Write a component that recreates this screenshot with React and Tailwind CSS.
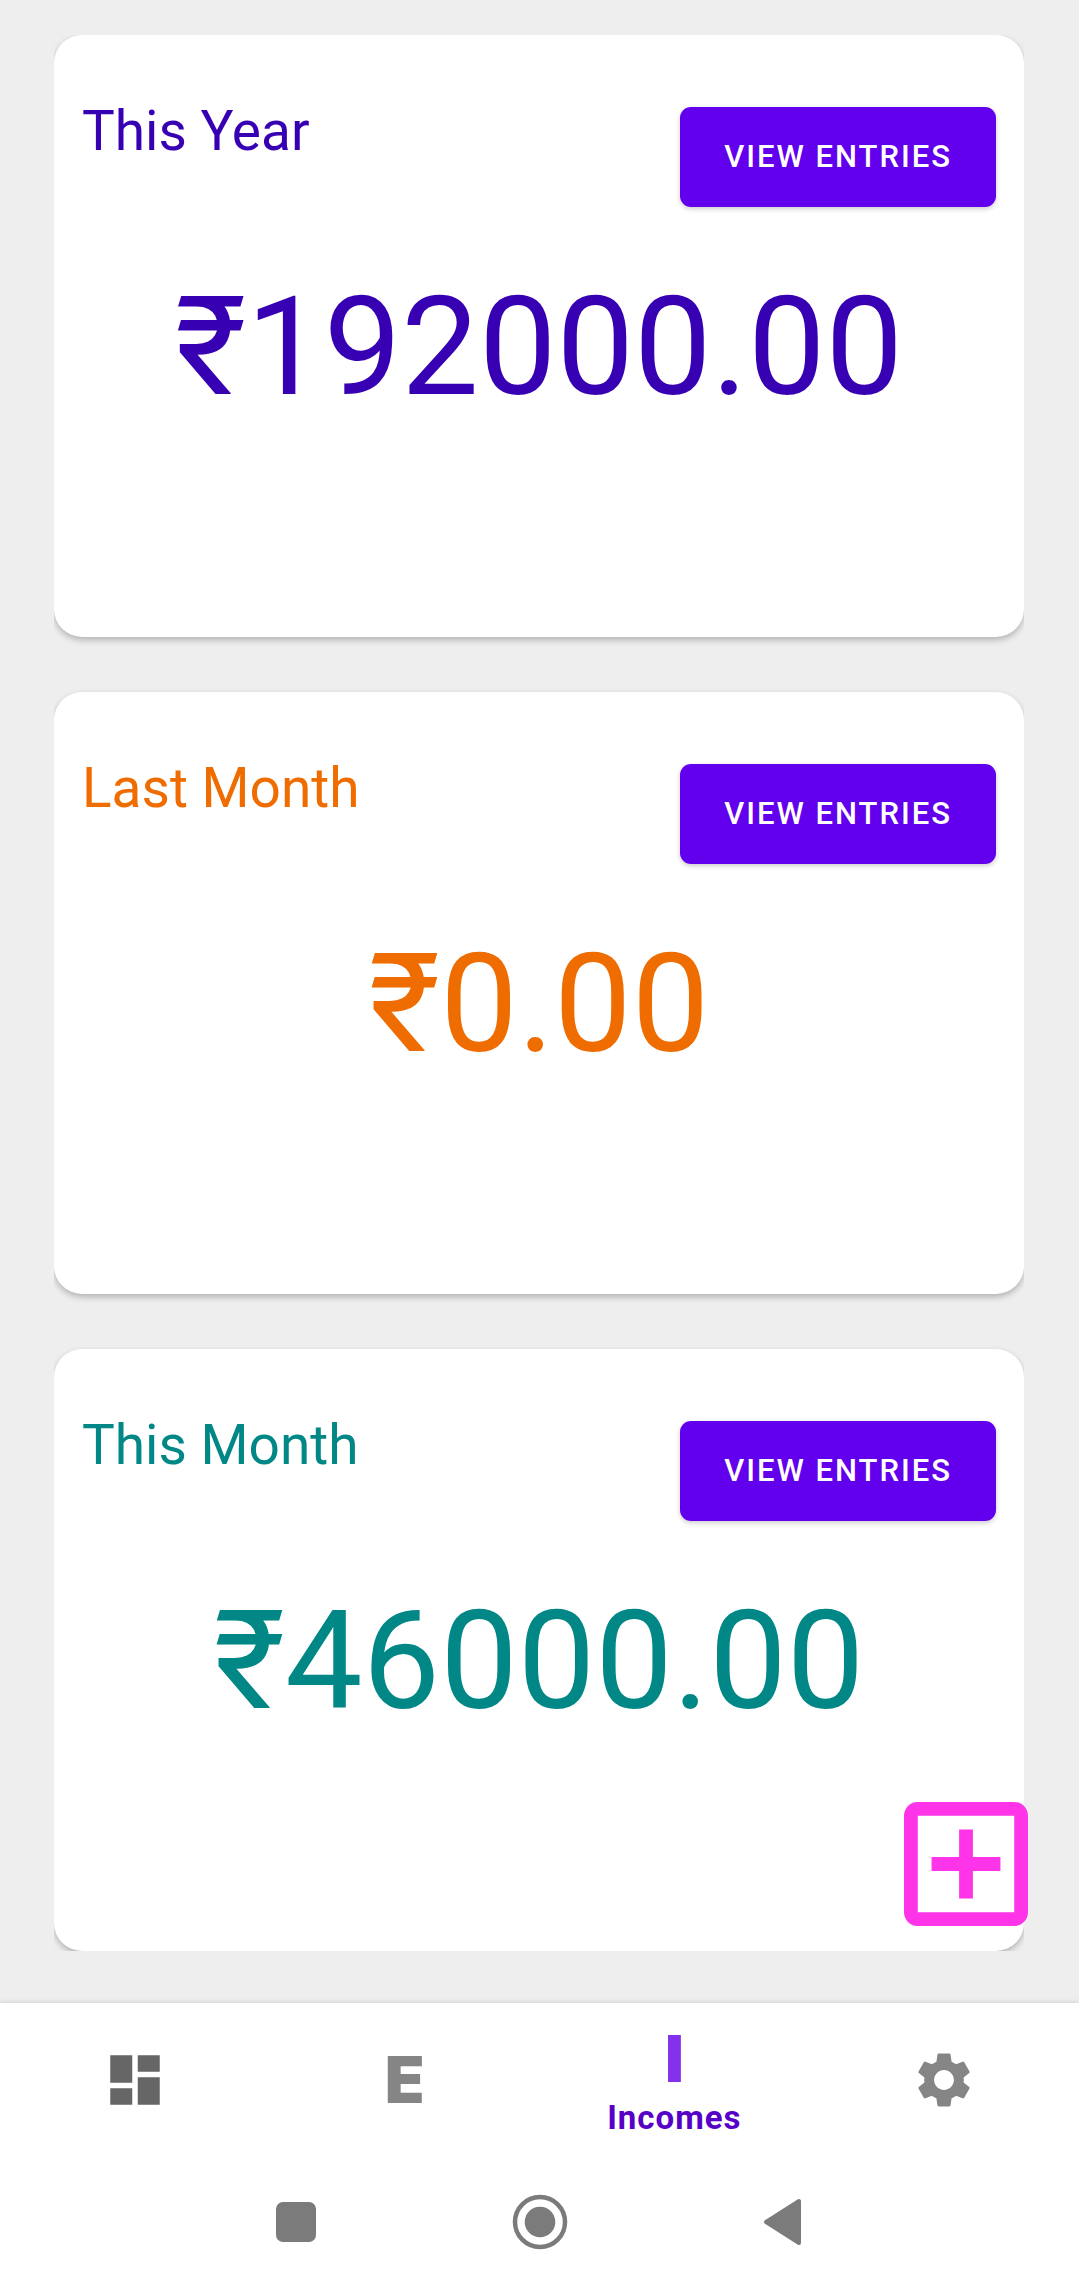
import React, { useState } from "react";
import { MdDashboard, MdSettings } from "react-icons/md";
import clsx from "clsx";

const summaries = [
  { id: "year", title: "This Year", amount: "₹192000.00", color: "text-[#3700b3]" },
  { id: "last-month", title: "Last Month", amount: "₹0.00", color: "text-[#ef6c00]" },
  { id: "month", title: "This Month", amount: "₹46000.00", color: "text-[#018786]" },
];

const SummaryCard = ({ title, amount, color }) => (
  <article className="rounded-[28px] bg-white px-7 pt-16 pb-[209px] shadow-[0_3px_6px_rgba(0,0,0,0.25)]">
    <div className="flex items-start justify-between">
      <h2 className={clsx("text-[55px] leading-[64px]", color)}>{title}</h2>
      <button
        type="button"
        className="mt-2 h-[100px] rounded-[11px] bg-[#6200ee] px-11 pt-px text-[31px] font-medium tracking-[2px] text-white uppercase shadow-[0_2px_5px_rgba(0,0,0,0.2)]"
      >
        View Entries
      </button>
    </div>
    <p className={clsx("mt-[59px] text-center text-[138px] leading-[162px]", color)}>{amount}</p>
  </article>
);

const AddButton = () => (
  <button type="button" aria-label="Add income" className="absolute right-[51px] bottom-[77px] text-[#ff33e7]">
    <svg viewBox="3 3 18 18" className="size-[124px]" fill="currentColor">
      <path d="M19 3H5c-1.11 0-2 .9-2 2v14c0 1.1.89 2 2 2h14c1.1 0 2-.9 2-2V5c0-1.1-.9-2-2-2zm0 16H5V5h14v14zm-8-2h2v-4h4v-2h-4V7h-2v4H7v2h4z" />
    </svg>
  </button>
);

const LetterIcon = ({ children }) => (
  <span className="font-['Inter'] text-[65px] leading-[66px] font-black [font-optical-sizing:none]">{children}</span>
);

const tabs = [
  { id: "dashboard", label: "Dashboard", icon: <MdDashboard className="size-[66px]" />, idle: "text-[#666666]" },
  { id: "expenses", label: "Expenses", icon: <LetterIcon>E</LetterIcon>, idle: "text-[#858585]" },
  { id: "incomes", label: "Incomes", icon: <LetterIcon>I</LetterIcon>, idle: "text-[#858585]" },
  { id: "settings", label: "Settings", icon: <MdSettings className="size-[66px]" />, idle: "text-[#858585]" },
];

const BottomNav = () => {
  const [active, setActive] = useState("incomes");

  return (
    <nav className="grid h-[154px] grid-cols-4 bg-white shadow-[0_-2px_3px_rgba(0,0,0,0.08)]">
      {tabs.map((tab) => {
        const isActive = tab.id === active;
        return (
          <button
            key={tab.id}
            type="button"
            aria-label={tab.label}
            onClick={() => setActive(tab.id)}
            className={clsx(
              "flex flex-col items-center",
              isActive ? "justify-start gap-1.5 pt-[23px] text-[#8430ec]" : "justify-center",
              !isActive && tab.idle
            )}
          >
            {tab.icon}
            {/* Only the selected tab shows its label */}
            {isActive && (
              <span className="text-[33px] leading-10 font-bold tracking-[1px] text-[#5600c8]">{tab.label}</span>
            )}
          </button>
        );
      })}
    </nav>
  );
};

const SystemBar = () => (
  <div className="flex h-[130px] items-center justify-center gap-[188px] bg-white text-[#7b7b7b]">
    <button type="button" aria-label="Recent apps">
      <svg viewBox="0 0 56 56" className="size-14" fill="currentColor">
        <rect x="8" y="8" width="40" height="40" rx="7" />
      </svg>
    </button>
    <button type="button" aria-label="Home">
      <svg viewBox="0 0 56 56" className="size-14" fill="currentColor">
        <circle cx="28" cy="28" r="25" fill="none" stroke="currentColor" strokeWidth="4.5" />
        <circle cx="28" cy="28" r="15.3" />
      </svg>
    </button>
    <button type="button" aria-label="Back">
      <svg viewBox="0 0 56 56" className="size-14" fill="currentColor" stroke="currentColor" strokeWidth="4" strokeLinejoin="round">
        <path d="M10 28 43 7V49Z" />
      </svg>
    </button>
  </div>
);

const App = () => {
  return (
    <div className="flex min-h-screen flex-col bg-[#eeeeee] font-['Roboto',sans-serif]">
      <main className="relative flex-1 pt-[35px] pr-[55px] pb-[52px] pl-[54px]">
        <div className="flex flex-col gap-[55px] overflow-hidden">
          {summaries.map((item) => (
            <SummaryCard key={item.id} {...item} />
          ))}
        </div>
        <AddButton />
      </main>
      <BottomNav />
      <SystemBar />
    </div>
  );
};

export default App;
